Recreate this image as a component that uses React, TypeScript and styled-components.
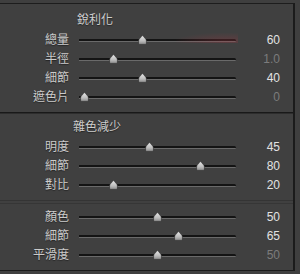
import React, { useId } from "react";
import styled, { createGlobalStyle } from "styled-components";

//-----------------------STYLE-----------------------//

const GlobalStyle = createGlobalStyle`
  html, body {
    margin: 0;
    padding: 0;
    background: #3f3f3f;
  }
  body {
    width: 300px;
    height: 274px;
    overflow: hidden;
    font-family: "Liberation Sans", "Noto Sans CJK TC", sans-serif;
  }
`;

const Frame = styled.div`
  display: flex;
  padding-top: 3px;
`;

const Panel = styled.div`
  width: 293px;
  background: #404040;
  border-top: 1px solid #1d1d1d;
  border-right: 2px solid #1b1b1b;
  border-bottom: 1px solid #1b1b1b;
`;

const Section = styled.div<{ $top: number; $bottom: number }>`
  display: flex;
  flex-direction: column;
  padding: ${(p) => p.$top}px 0 ${(p) => p.$bottom}px;
`;

const Title = styled.div<{ $indent: number; $top: number }>`
  padding: ${(p) => p.$top}px 0 0 ${(p) => p.$indent}px;
  margin-bottom: 2px;
  height: 18px;
  line-height: 18px;
  font-size: 12px;
  color: #cdcdcd;
  text-shadow: 0 1px 1px rgba(0, 0, 0, 0.45);
`;

const HardDivider = styled.div`
  height: 0;
  border-top: 1px solid #191919;
  border-bottom: 1px solid #2d2d2d;
`;

const SoftDivider = styled.div`
  height: 2px;
  border-top: 1px solid #343434;
  border-bottom: 1px solid #363636;
`;

const Row = styled.div`
  display: grid;
  grid-template-columns: 69px 157px 34px;
  column-gap: 10px;
  align-items: center;
  height: 19px;
`;

const Label = styled.span`
  text-align: right;
  white-space: nowrap;
  font-size: 12px;
  line-height: 19px;
  color: #cbcbcb;
  text-shadow: 0 1px 1px rgba(0, 0, 0, 0.45);
`;

const Track = styled.div<{ $accent?: boolean }>`
  position: relative;
  height: 3px;
  border-radius: 0 2px 2px 0;
  background: linear-gradient(#141414 0 2px, #6a6a6a 2px);
  &::before {
    content: "";
    display: ${(p) => (p.$accent ? "block" : "none")};
    position: absolute;
    left: 62%;
    right: -2px;
    top: -6px;
    bottom: -1px;
    background: radial-gradient(
      ellipse at 80% 85%,
      rgba(160, 55, 65, 0.32) 0%,
      rgba(160, 55, 65, 0.14) 45%,
      rgba(160, 55, 65, 0) 75%
    );
  }
`;

const ThumbSvg = styled.svg`
  position: absolute;
  top: -4px;
  width: 9px;
  height: 10px;
`;

const Value = styled.span<{ $dim?: boolean }>`
  text-align: right;
  font-size: 12px;
  line-height: 19px;
  color: ${(p) => (p.$dim ? "#7c7c7c" : "#e2e2e2")};
`;

//-----------------------COMPONENT-----------------------//

type SliderData = {
  label: string;
  value: string;
  pos: number;
  dim?: boolean;
  accent?: boolean;
};

const sharpening: SliderData[] = [
  { label: "總量", value: "60", pos: 60 / 150, accent: true },
  { label: "半徑", value: "1.0", pos: 0.2, dim: true },
  { label: "細節", value: "40", pos: 0.4 },
  { label: "遮色片", value: "0", pos: 0, dim: true },
];

const luminance: SliderData[] = [
  { label: "明度", value: "45", pos: 0.45 },
  { label: "細節", value: "80", pos: 0.8 },
  { label: "對比", value: "20", pos: 0.2 },
];

const color: SliderData[] = [
  { label: "顏色", value: "50", pos: 0.5 },
  { label: "細節", value: "65", pos: 0.65 },
  { label: "平滑度", value: "50", pos: 0.5, dim: true },
];

const Thumb = ({ pos }: { pos: number }) => {
  const id = useId().replace(/:/g, "");
  return (
    <ThumbSvg viewBox="0 0 9 10" style={{ left: pos * 146 + 0.5 }}>
      <defs>
        <linearGradient id={id} x1="0" y1="0" x2="0" y2="1">
          <stop offset="0" stopColor="#e6e6e6" />
          <stop offset="0.6" stopColor="#bdbdbd" />
          <stop offset="1" stopColor="#8a8a8a" />
        </linearGradient>
      </defs>
      <path
        d="M4.5 0.6 C5.6 1.8 8.4 4 8.4 5.8 V8.4 Q8.4 9.4 7.4 9.4 H1.6 Q0.6 9.4 0.6 8.4 V5.8 C0.6 4 3.4 1.8 4.5 0.6 Z"
        fill={`url(#${id})`}
        stroke="#2a2a2a"
        strokeWidth="0.6"
      />
    </ThumbSvg>
  );
};

const SliderRow = ({ item }: { item: SliderData }) => (
  <Row>
    <Label>{item.label}</Label>
    <Track $accent={item.accent}>
      <Thumb pos={item.pos} />
    </Track>
    <Value $dim={item.dim}>{item.value}</Value>
  </Row>
);

const App = () => {
  return (
    <Frame>
      <GlobalStyle />
      <Panel>
        <Section $top={0} $bottom={5}>
          <Title $indent={77} $top={7}>
            銳利化
          </Title>
          {sharpening.map((item) => (
            <SliderRow key={item.label} item={item} />
          ))}
        </Section>
        <HardDivider />
        <Section $top={0} $bottom={5}>
          <Title $indent={73} $top={4}>
            雜色減少
          </Title>
          {luminance.map((item) => (
            <SliderRow key={item.label} item={item} />
          ))}
        </Section>
        <SoftDivider />
        <Section $top={4} $bottom={5}>
          {color.map((item) => (
            <SliderRow key={item.label} item={item} />
          ))}
        </Section>
      </Panel>
    </Frame>
  );
};

export default App;
